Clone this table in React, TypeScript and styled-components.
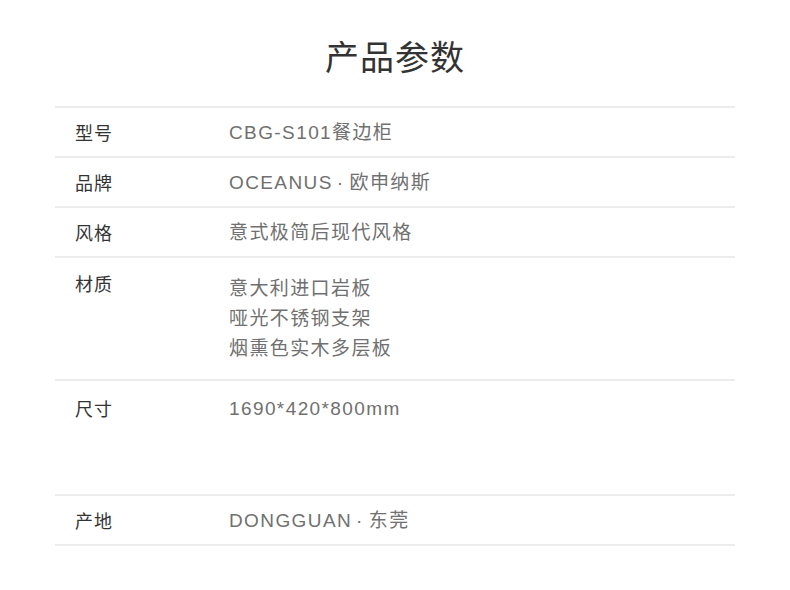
import styled, { createGlobalStyle } from "styled-components";

const GlobalStyle = createGlobalStyle`
  body {
    margin: 0;
    background: #fff;
    font-family: "Liberation Sans", "Noto Sans CJK SC", sans-serif;
  }
`;

const Page = styled.div`
  width: 680px;
  margin: 0 auto;
`;

const Title = styled.h1`
  margin: 0;
  padding: 36px 0 30px;
  height: 40px;
  line-height: 40px;
  text-align: center;
  font-family: "Noto Sans CJK SC", sans-serif;
  font-size: 34px;
  font-weight: 400;
  letter-spacing: 1px;
  color: #333;
`;

const Table = styled.div`
  border-bottom: 2px solid #ececec;
`;

const Row = styled.div<{ $height: number }>`
  display: flex;
  align-items: flex-start;
  box-sizing: content-box;
  height: ${(p) => p.$height}px;
  padding-left: 20px;
  border-top: 2px solid #ececec;
`;

const Label = styled.div<{ $top: number }>`
  width: 154px;
  flex-shrink: 0;
  padding-top: ${(p) => p.$top}px;
  line-height: 30px;
  font-family: "Noto Sans CJK SC", sans-serif;
  font-size: 18px;
  letter-spacing: 1px;
  color: #333;
`;

const Value = styled.div<{ $top: number }>`
  padding-top: ${(p) => p.$top}px;
  line-height: 30px;
  font-size: 19px;
  letter-spacing: 1.4px;
  color: #707070;
`;

const Dot = styled.span`
  margin: 0 5px 0 4px;
`;

type Spec = {
  label: string;
  lines: React.ReactNode[];
  height: number;
  labelTop: number;
  valueTop: number;
};

const specs: Spec[] = [
  { label: "型号", lines: ["CBG-S101餐边柜"], height: 48, labelTop: 9, valueTop: 10 },
  {
    label: "品牌",
    lines: [
      <>
        OCEANUS<Dot>·</Dot>欧申纳斯
      </>,
    ],
    height: 48,
    labelTop: 9,
    valueTop: 10,
  },
  { label: "风格", lines: ["意式极简后现代风格"], height: 48, labelTop: 9, valueTop: 10 },
  {
    label: "材质",
    lines: ["意大利进口岩板", "哑光不锈钢支架", "烟熏色实木多层板"],
    height: 121,
    labelTop: 10,
    valueTop: 16,
  },
  { label: "尺寸", lines: ["1690*420*800mm"], height: 113, labelTop: 12, valueTop: 13 },
  {
    label: "产地",
    lines: [
      <>
        DONGGUAN<Dot>·</Dot>东莞
      </>,
    ],
    height: 48,
    labelTop: 9,
    valueTop: 10,
  },
];

export default function App() {
  return (
    <Page>
      <GlobalStyle />
      <Title>产品参数</Title>
      <Table>
        {specs.map((s) => (
          <Row key={s.label} $height={s.height}>
            <Label $top={s.labelTop}>{s.label}</Label>
            <Value $top={s.valueTop}>
              {s.lines.map((l, i) => (
                <div key={i}>{l}</div>
              ))}
            </Value>
          </Row>
        ))}
      </Table>
    </Page>
  );
}
